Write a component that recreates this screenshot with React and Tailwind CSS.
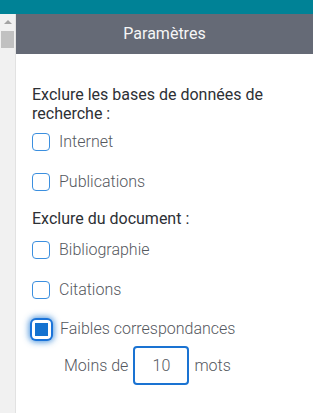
import React from "react";

function Box({ checked }) {
  if (checked) {
    return (
      <span className="flex h-[19px] w-[19px] shrink-0 items-center justify-center rounded-[4px] bg-white shadow-[0_0_0_2px_#1a73d9,0_0_6px_3px_rgba(25,118,210,0.8)]">
        <span className="h-[13px] w-[13px] bg-[#1472d0]" />
      </span>
    );
  }
  return <span className="h-[18px] w-[18px] shrink-0 rounded-[4px] border-[1.5px] border-[#3b8fdf] bg-white" />;
}

function Row({ label, checked, className = "" }) {
  return (
    <div className={`flex h-[26px] items-center gap-[9px] ${className}`}>
      <Box checked={checked} />
      <span className="text-[16px] font-light text-[#55585e]">{label}</span>
    </div>
  );
}

export default function App() {
  return (
    <div className="flex h-[413px] w-[313px] flex-col overflow-hidden bg-white font-['Roboto',sans-serif]">
      <div className="h-[14px] shrink-0 bg-[#008296]" />
      <div className="flex flex-1">
        <div className="flex w-[16px] shrink-0 flex-col items-center border-r border-[#e2e2e2] bg-[#f1f1f1]">
          <div className="mt-[6px] h-0 w-0 border-x-[4px] border-b-[4px] border-x-transparent border-b-[#a3a3a3]" />
          <div className="mt-[7px] h-[17px] w-[13px] bg-[#c1c1c1]" />
        </div>
        <div className="flex flex-1 flex-col">
          <div className="flex h-[40px] shrink-0 items-center justify-center bg-[#656a76] text-[16px] text-[#f6f6f6]">
            Paramètres
          </div>
          <div className="flex flex-col pl-[16px] pt-[31px]">
            <div className="text-[16px] leading-[19px] text-[#2d3035]">
              Exclure les bases de données de
              <br />
              recherche :
            </div>
            <Row label="Internet" className="mt-[6px]" />
            <Row label="Publications" className="mt-[14px]" />
            <div className="mt-[14px] text-[16px] leading-[20px] text-[#2d3035]">
              Exclure du document :
            </div>
            <Row label="Bibliographie" className="mt-[8px]" />
            <Row label="Citations" className="mt-[14px]" />
            <Row label="Faibles correspondances" checked className="mt-[13px]" />
            <div className="mt-[4px] flex items-center pl-[32px] text-[16px] font-light text-[#55585e]">
              <span>Moins de</span>
              <div className="ml-[5px] flex h-[39px] w-[56px] items-center justify-center rounded-[4px] border-2 border-[#1a73d2]">
                10
              </div>
              <span className="ml-[5px]">mots</span>
            </div>
          </div>
        </div>
      </div>
    </div>
  );
}
